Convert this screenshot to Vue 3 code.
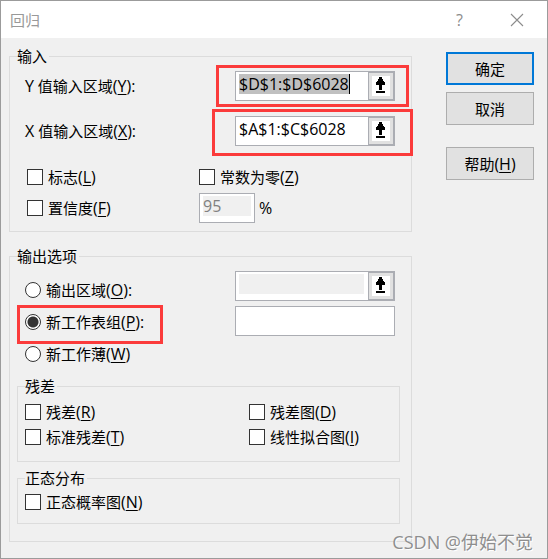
<template>
  <form class="dialog" @submit.prevent>
    <header class="titlebar">
      <h1 class="title">回归</h1>
      <button type="button" class="title-btn help" aria-label="帮助">?</button>
      <button type="button" class="title-btn" aria-label="关闭">
        <svg width="14" height="14" viewBox="0 0 14 14">
          <path d="M1 1L13 13M13 1L1 13" stroke="#8c8c8c" stroke-width="1.1" fill="none" />
        </svg>
      </button>
    </header>

    <main class="body">
      <div class="groups">
        <fieldset class="group">
          <legend>输入</legend>
          <div class="ranges">
            <div v-for="r in ranges" :key="r.key" class="range-row">
              <label :for="'range-' + r.key"><span class="key">{{ r.key }}</span> 值输入区域<span class="key">(<u>{{ r.key }}</u>):</span></label>
              <div :class="['field', 'marked', 'marked-' + r.key.toLowerCase()]">
                <input :id="'range-' + r.key" ref="rangeInputs" v-model="r.value" type="text" spellcheck="false" />
                <span v-if="r.key === 'Y'" class="caret"></span>
                <button type="button" class="picker" aria-label="选择区域">
                  <svg width="18" height="20" viewBox="0 0 18 20" shape-rendering="crispEdges">
                    <path :d="arrow" />
                  </svg>
                </button>
              </div>
            </div>
          </div>
          <div class="flags">
            <label class="option"><input v-model="labels" type="checkbox" /><span>标志<span class="key">(<u>L</u>)</span></span></label>
            <label class="option"><input v-model="zero" type="checkbox" /><span>常数为零<span class="key">(<u>Z</u>)</span></span></label>
            <label class="option"><input v-model="confidence" type="checkbox" /><span>置信度<span class="key">(<u>F</u>)</span></span></label>
            <div class="percent">
              <div class="field small">
                <input v-model="level" type="text" aria-label="置信度" :disabled="!confidence" />
              </div>
              <span class="key">%</span>
            </div>
          </div>
        </fieldset>

        <fieldset class="group">
          <legend>输出选项</legend>
          <div class="output">
            <div class="radios">
              <label v-for="o in outputs" :key="o.key" :class="['option', { boxed: o.key === 'P' }]">
                <input v-model="output" type="radio" name="output" :value="o.key" />
                <span>{{ o.text }}<span class="key">(<u>{{ o.key }}</u>){{ o.tail }}</span></span>
              </label>
            </div>
            <div class="targets">
              <div class="field">
                <input v-model="outRange" type="text" aria-label="输出区域" :disabled="output !== 'O'" />
                <button type="button" class="picker" aria-label="选择区域">
                  <svg width="18" height="20" viewBox="0 0 18 20" shape-rendering="crispEdges">
                    <path :d="arrow" />
                  </svg>
                </button>
              </div>
              <div class="field">
                <input v-model="sheetName" type="text" aria-label="新工作表组" />
              </div>
            </div>
          </div>

          <fieldset class="group sub">
            <legend>残差</legend>
            <div class="checks">
              <label v-for="c in residuals" :key="c.key" class="option">
                <input v-model="c.on" type="checkbox" />
                <span>{{ c.text }}<span class="key">(<u>{{ c.key }}</u>)</span></span>
              </label>
            </div>
          </fieldset>

          <fieldset class="group sub normal">
            <legend>正态分布</legend>
            <label class="option">
              <input v-model="normal" type="checkbox" />
              <span>正态概率图<span class="key">(<u>N</u>)</span></span>
            </label>
          </fieldset>
        </fieldset>
      </div>

      <div class="actions">
        <button type="submit" class="primary">确定</button>
        <button type="button">取消</button>
        <button type="button" class="apart">帮助<span class="key">(<u>H</u>)</span></button>
      </div>
    </main>
    <div class="watermark">CSDN @伊始不觉</div>
  </form>
</template>

<script setup>
import { ref, onMounted } from 'vue'

const arrow = 'M7 1h3v2h1v2h1v1h1v3h-3v5h-3v-5h-3v-3h1v-1h1v-2h1zM4 15h9v2h-9z'

const ranges = ref([
  { key: 'Y', value: '$D$1:$D$6028' },
  { key: 'X', value: '$A$1:$C$6028' }
])
const outputs = [
  { key: 'O', text: '输出区域', tail: ':' },
  { key: 'P', text: '新工作表组', tail: ':' },
  { key: 'W', text: '新工作薄', tail: '' }
]
const residuals = ref([
  { key: 'R', text: '残差', on: false },
  { key: 'D', text: '残差图', on: false },
  { key: 'T', text: '标准残差', on: false },
  { key: 'I', text: '线性拟合图', on: false }
])

const labels = ref(false)
const zero = ref(false)
const confidence = ref(false)
const level = ref('95')
const output = ref('P')
const outRange = ref('')
const sheetName = ref('')
const normal = ref(false)
const rangeInputs = ref([])

onMounted(() => {
  rangeInputs.value[0].focus()
  rangeInputs.value[0].select()
})
</script>

<style>
body {
  margin: 0;
  background: #f0f0f0;
}
</style>

<style scoped>
.dialog {
  position: relative;
  box-sizing: border-box;
  min-height: 100vh;
  border: 1px solid #9b9b9b;
  background: #f0f0f0;
  color: #000;
  font-family: "Open Sans", "Noto Sans CJK SC", sans-serif;
  font-size: 15px;
  line-height: 20px;
}

.titlebar {
  display: flex;
  align-items: center;
  height: 37px;
  padding: 0 2px 0 9px;
  background: #fff;
  color: #999;
}

.title {
  flex: 1;
  margin: 0;
  font-size: 15px;
  font-weight: 400;
}

.title-btn {
  display: flex;
  align-items: center;
  justify-content: center;
  width: 57px;
  height: 36px;
  padding: 0;
  border: 0;
  background: none;
  color: #8c8c8c;
  font: inherit;
}

.title-btn.help {
  font-size: 16px;
}

.body {
  display: grid;
  grid-template-columns: 1fr 88px;
  gap: 34px;
  padding: 8px 13px 16px 8px;
}

.groups {
  display: flex;
  flex-direction: column;
  gap: 14px;
}

.group {
  min-width: 0;
  margin: 0;
  padding: 5px 11px 8px 7px;
  border: 1px solid #dcdcdc;
}

legend {
  padding: 0 2px 0 0;
}

/* latin part of a caption */
.key {
  font-size: 16px;
  line-height: 16px;
}

.ranges {
  display: flex;
  flex-direction: column;
  gap: 15px;
  padding: 0 5px 0 8px;
}

.range-row,
.output {
  display: grid;
  grid-template-columns: 1fr 160px;
}

.range-row {
  align-items: center;
}

.field {
  position: relative;
  display: flex;
  align-items: flex-start;
  box-sizing: border-box;
  width: 160px;
  height: 30px;
  padding: 0 0 0 3px;
  border: 1px solid #abadb3;
  background: #fff;
}

.field input {
  flex: 1;
  min-width: 0;
  height: 20px;
  margin: 2px 4px 0 0;
  padding: 0;
  border: 0;
  outline: 0;
  background: #fff;
  color: #000;
  font: inherit;
  font-size: 16px;
  line-height: 20px;
}

.field input:disabled {
  background: #f0f0f0;
  color: #808080;
}

.field input::selection {
  background: #c0c0c0;
  color: #000;
}

.caret {
  position: absolute;
  top: 2px;
  left: 113px;
  width: 1px;
  height: 20px;
  background: #000;
}

.field.small {
  width: 56px;
}

.field.small input {
  margin-right: 3px;
}

.picker {
  display: flex;
  box-sizing: border-box;
  width: 26px;
  height: 28px;
  padding: 3px;
  border: 1px solid #abadb3;
  background: #e1e1e1;
}

.picker svg {
  background: #fff;
}

/* red annotation boxes */
.marked::after,
.boxed::after {
  content: '';
  position: absolute;
  border: 3px solid #fb3b3b;
  pointer-events: none;
}

.marked-y::after {
  inset: -7px -15px -7px -20px;
}

.marked-x::after {
  inset: -8px -19px -11px -24px;
}

.boxed::after {
  top: -1px;
  left: -8px;
  width: 140px;
  height: 33px;
}

.option {
  position: relative;
  display: flex;
  align-items: center;
  gap: 5px;
}

.option input {
  appearance: none;
  box-sizing: border-box;
  flex: none;
  width: 16px;
  height: 16px;
  margin: 0;
  border: 1px solid #333;
  background: #fff;
}

.option input[type='checkbox']:checked {
  background: #333;
}

.option input[type='radio'] {
  border-radius: 50%;
}

.option input[type='radio']:checked {
  background: radial-gradient(circle, #333 5px, #fff 6px);
}

.flags {
  display: grid;
  grid-template-columns: 172px 1fr;
  grid-template-rows: 24px 30px;
  row-gap: 4px;
  margin-top: 19px;
  padding-left: 10px;
}

.percent {
  display: flex;
  align-items: center;
  gap: 4px;
}

.output {
  padding: 0 5px 0 8px;
}

.radios {
  display: grid;
  grid-auto-rows: 32px;
  justify-content: start;
  padding-top: 3px;
}

.targets {
  display: flex;
  flex-direction: column;
  gap: 5px;
}

.sub {
  margin-top: 6px;
  padding: 3px 7px 12px;
}

.checks {
  display: grid;
  grid-template-columns: 224px 1fr;
  grid-auto-rows: 25px;
}

.normal {
  margin-bottom: 9px;
  padding: 1px 7px 9px;
}

.normal .option {
  height: 25px;
}

.actions {
  display: flex;
  flex-direction: column;
  gap: 7px;
  padding-top: 6px;
}

.actions button {
  height: 33px;
  padding: 0;
  border: 1px solid #adadad;
  background: #e1e1e1;
  color: #000;
  font: inherit;
}

.actions .primary {
  border: 2px solid #0078d7;
}

.actions .apart {
  margin-top: 15px;
}

u {
  text-decoration-thickness: 1px;
  text-underline-offset: 2px;
}

.watermark {
  position: absolute;
  right: 14px;
  bottom: 4px;
  color: #8e8e8e;
  font-size: 18px;
  line-height: 24px;
  text-shadow: 1px 1px 0 #fff;
}
</style>
